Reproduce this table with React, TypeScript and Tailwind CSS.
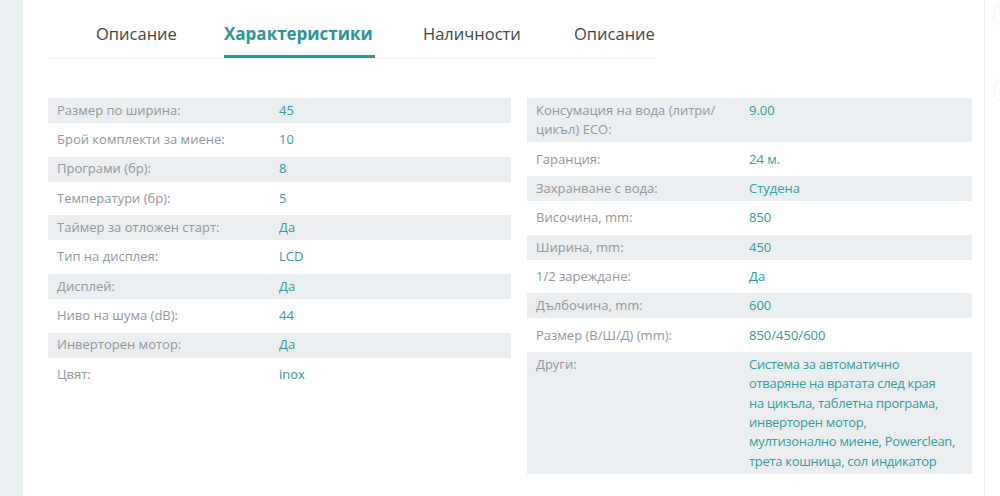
const leftRows: [string, string][] = [
  ["Размер по ширина:", "45"],
  ["Брой комплекти за миене:", "10"],
  ["Програми (бр):", "8"],
  ["Температури (бр):", "5"],
  ["Таймер за отложен старт:", "Да"],
  ["Тип на дисплея:", "LCD"],
  ["Дисплей:", "Да"],
  ["Ниво на шума (dB):", "44"],
  ["Инверторен мотор:", "Да"],
  ["Цвят:", "inox"],
]

const rightRows: [string, string][] = [
  ["Консумация на вода (литри/ цикъл) ECO:", "9.00"],
  ["Гаранция:", "24 м."],
  ["Захранване с вода:", "Студена"],
  ["Височина, mm:", "850"],
  ["Ширина, mm:", "450"],
  ["1/2 зареждане:", "Да"],
  ["Дълбочина, mm:", "600"],
  ["Размер (В/Ш/Д) (mm):", "850/450/600"],
  [
    "Други:",
    "Система за автоматично\nотваряне на вратата след края\nна цикъла, таблетна програма,\nинверторен мотор,\nмултизонално миене, Powerclean,\nтрета кошница, сол индикатор",
  ],
]

const tabs = [
  { label: "Описание", w: "w-[80px]" },
  { label: "Характеристики", w: "w-[151px]" },
  { label: "Наличности", w: "w-[103px]" },
  { label: "Описание", w: "w-[80px]" },
]

function SpecTable({ rows, labelCol }: { rows: [string, string][]; labelCol: string }) {
  return (
    <div className="flex flex-col gap-[4.33px]">
      {rows.map(([label, value], i) => {
        const lines = value.split("\n")
        return (
          <div
            key={i}
            className={`grid ${labelCol} min-h-[25px] py-[2.8px] text-[13px] leading-[19.4px] ${
              i % 2 === 0 ? "bg-[#ebeef0]" : "bg-white"
            }`}
          >
            <div className="pl-[9px] pr-[12px] text-[#92979b]">{label}</div>
            {lines.length > 1 ? (
              <div className="pr-[9px] tracking-[-0.3px] text-[#349c9e]">
                {lines.map((l, j) => (
                  <div key={j} className="whitespace-nowrap">
                    {l}
                  </div>
                ))}
              </div>
            ) : (
              <div className="pr-[9px] text-[#349c9e]">{value}</div>
            )}
          </div>
        )
      })}
    </div>
  )
}

export default function App() {
  return (
    <div
      lang="bg"
      className="flex h-[496px] w-[1000px] overflow-hidden bg-white"
      style={{ fontFamily: '"Open Sans", "Noto Sans", sans-serif' }}
    >
      {/* left gutter */}
      <div className="w-[23px] shrink-0 bg-[#e9eef1]" />

      <div className="w-[962px] shrink-0 border-r border-[#eef0f2] pl-[25px] pr-[13px]">
        {/* tabs */}
        <div className="flex w-[608px] gap-12 border-b border-[#f2f3f4] pl-12">
          {tabs.map((t, i) => (
            <div
              key={i}
              className={`flex h-[58px] ${t.w} items-center whitespace-nowrap border-b-[3px] pt-[13px] ${
                i === 1
                  ? "border-[#2b9597] text-[17px] font-bold text-[#2b9597]"
                  : "border-transparent text-[16.5px] text-[#444]"
              }`}
            >
              {t.label}
            </div>
          ))}
        </div>

        <div className="mt-[39px] grid grid-cols-[463px_445px] gap-x-4">
          <SpecTable rows={leftRows} labelCol="grid-cols-[231px_1fr]" />
          <SpecTable rows={rightRows} labelCol="grid-cols-[222px_1fr]" />
        </div>
      </div>

      {/* right edge */}
      <div className="relative flex-1">
        <div className="absolute left-[8px] top-[2px] h-[26px] w-[26px] rounded-full border border-[#f1f3f4]" />
        <div className="absolute left-[8px] top-[77px] h-[26px] w-[26px] rounded-full border border-[#f1f3f4]" />
      </div>
    </div>
  )
}
